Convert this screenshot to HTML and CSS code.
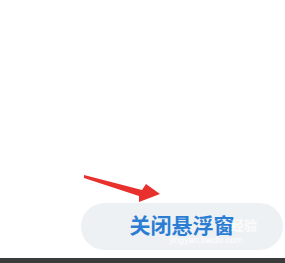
FILE: index.html
```html
<!DOCTYPE html>
<html lang="zh">
<head>
<meta charset="utf-8">
<link rel="stylesheet" href="styles.css">
</head>
<body>
<div class="page">
  <div class="spacer"></div>
  <div class="action">
    <svg class="arrow" width="90" height="42" viewBox="0 0 90 42">
      <polygon points="2,12 60,27 64,21 78,31 57,39 57,33 2,15" fill="#e8302c"/>
    </svg>
    <div class="pill">
      <span class="label">关闭悬浮窗</span>
      <span class="wm">经验</span>
      <span class="wm-url">jingyan.baidu.com</span>
    </div>
  </div>
  <div class="bar"></div>
</div>
</body>
</html>
```
FILE: styles.css
```css
html, body {
  margin: 0;
  padding: 0;
  background: #ffffff;
}
.page {
  width: 285px;
  height: 263px;
  display: flex;
  flex-direction: column;
  font-family: "Noto Sans CJK SC", "Noto Sans", sans-serif;
}
.spacer {
  flex: 1;
}
.action {
  position: relative;
  padding-left: 81px;
  padding-right: 2px;
  margin-bottom: 8px;
}
.arrow {
  position: absolute;
  left: 82px;
  top: -40px;
}
.pill {
  position: relative;
  height: 47px;
  border-radius: 24px;
  background: #eef1f4;
  display: flex;
  align-items: center;
  justify-content: center;
}
.label {
  color: #2b7dd3;
  font-size: 21px;
  font-weight: 700;
  margin-top: -5px;
}
.wm {
  position: absolute;
  left: 150px;
  top: 12px;
  color: rgba(255,255,255,0.85);
  font-size: 13px;
  font-weight: 700;
}
.wm-url {
  position: absolute;
  left: 89px;
  top: 32px;
  color: rgba(255,255,255,0.95);
  font-size: 9px;
  font-family: "Liberation Sans", sans-serif;
}
.bar {
  height: 5px;
  background: #3b3b3b;
}
```
